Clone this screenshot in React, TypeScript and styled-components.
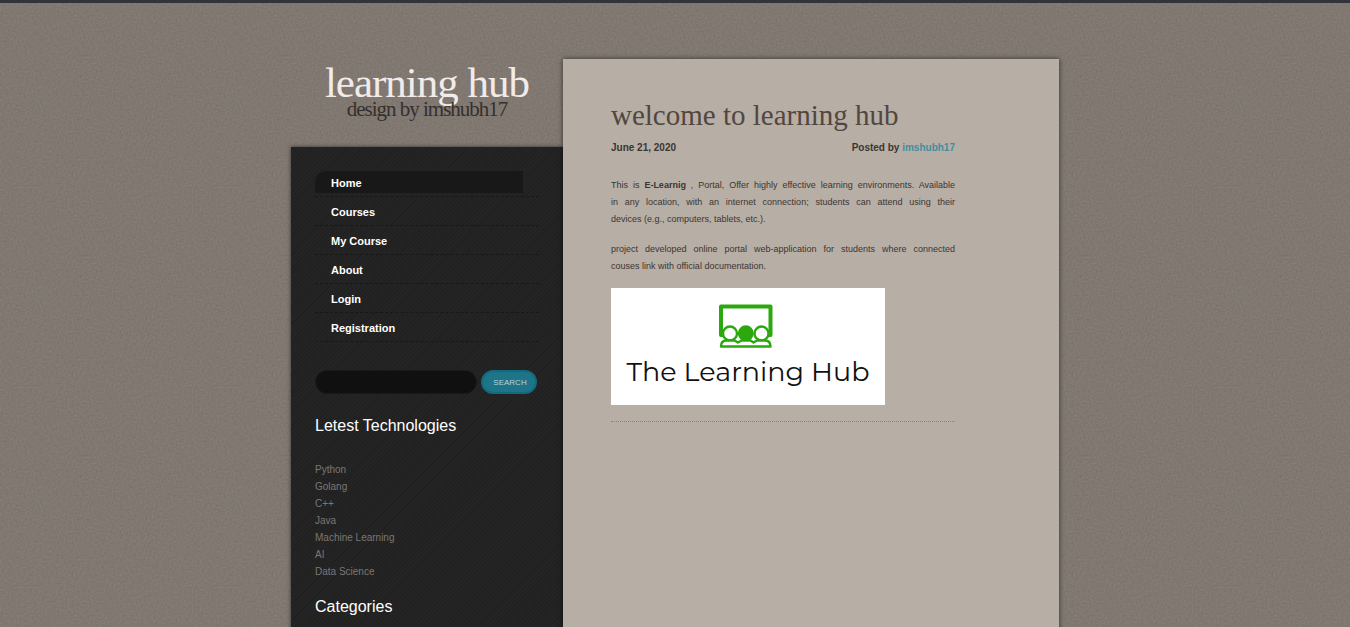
import React from "react";
import styled, { createGlobalStyle } from "styled-components";

const grain = `url("data:image/svg+xml,${encodeURIComponent(
  `<svg xmlns="http://www.w3.org/2000/svg" width="200" height="200"><filter id="n" x="0" y="0" width="100%" height="100%" color-interpolation-filters="sRGB"><feTurbulence type="fractalNoise" baseFrequency="0.5" numOctaves="3" stitchTiles="stitch"/><feColorMatrix values="0.08 0 0 0 0.460  0.08 0 0 0 0.430  0.08 0 0 0 0.402  0 0 0 0 1"/></filter><rect width="200" height="200" filter="url(#n)"/></svg>`
)}")`;

const sans = `"Liberation Sans", Arial, sans-serif`;
const serif = `Georgia, "Liberation Serif", serif`;

const GlobalStyle = createGlobalStyle`
  * { box-sizing: border-box; }
  html { background: #7e776f; }
  body {
    margin: 0;
    min-height: 100vh;
    background: #7e776f ${grain};
    border-top: 3px solid #33343a;
    color: #3c3533;
    font: 10px/17px ${sans};
    overflow: hidden;
  }
  a { text-decoration: none; }
`;

const Page = styled.div`
  display: flex;
  align-items: stretch;
  max-width: 768px;
  min-height: calc(100vh - 3px);
  margin: 0 auto;
  padding-top: 56px;
`;

const Side = styled.div`
  flex: 0 0 272px;
  display: flex;
  flex-direction: column;
`;

const Brand = styled.header`
  height: 88px;
  text-align: center;
  font-family: ${serif};
  letter-spacing: -1px;
`;

const BrandName = styled.h1`
  margin: 0;
  padding-top: 4px;
  font-size: 43px;
  line-height: 40px;
  font-weight: 400;
  a { color: #f1ebea; }
`;

const BrandNote = styled.p`
  margin: 0;
  font-size: 21px;
  line-height: 12px;
  color: #35302d;
`;

const Sidebar = styled.aside`
  flex: 1;
  padding: 24px;
  background: repeating-linear-gradient(135deg, #242424 0 2px, #202020 2px 3px);
  box-shadow: 0 0 4px rgba(0, 0, 0, 0.6);
`;

const Menu = styled.ul`
  list-style: none;
  margin: 0 0 28px;
  padding: 0;
`;

const MenuItem = styled.li`
  height: 29px;
  border-bottom: 1px dashed #181818;
  &:first-child { height: 26px; }
  &:not(:first-child) { padding-top: 3px; }
`;

const MenuLink = styled.a<{ $active?: boolean }>`
  display: block;
  width: 208px;
  height: 22px;
  padding: 1px 0 0 16px;
  border-top-left-radius: 12px;
  background: ${(p) => (p.$active ? "#181818" : "transparent")};
  color: #fff;
  font-size: 11px;
  font-weight: 700;
  line-height: 22px;
`;

const SearchForm = styled.form`
  display: flex;
  align-items: center;
  gap: 4px;
  margin-bottom: 20px;
`;

const SearchInput = styled.input`
  width: 162px;
  height: 24px;
  padding: 0 12px;
  border: 1px solid #1a1a1a;
  border-radius: 12px;
  background: #101010;
  color: #ddd;
  font: 10px ${sans};
`;

const SearchButton = styled.button`
  width: 56px;
  height: 24px;
  padding: 0 0 0 2px;
  border: 2px solid #126b7c;
  border-radius: 12px;
  background: #1e7587;
  color: #b9d3d8;
  font: 8px ${sans};
`;

const SideTitle = styled.h2`
  margin: 0;
  color: #fff;
  font-size: 16px;
  line-height: 24px;
  font-weight: 400;
`;

const TopicList = styled.ul`
  list-style: none;
  margin: 23px 0 15px;
  padding: 0;
  a { color: #7b7775; }
`;

const Content = styled.main`
  flex: 1;
  min-width: 0;
  padding: 40px 104px 40px 48px;
  background: #b7aea5;
  box-shadow: 0 0 5px rgba(0, 0, 0, 0.6);
`;

const Title = styled.h2`
  margin: 0;
  color: #53463f;
  font-family: ${serif};
  font-size: 29px;
  line-height: 32px;
  font-weight: 400;
`;

const Meta = styled.div`
  display: flex;
  justify-content: space-between;
  margin: 8px 0 21px;
  font-weight: 700;
  a { color: #438f9d; }
`;

const Text = styled.p`
  margin: 0 0 13px;
  font-size: 9px;
`;

const Line = styled.span`
  display: block;
  text-align: justify;
  text-align-last: justify;
  &:last-child { text-align-last: left; }
`;

const Banner = styled.figure`
  display: flex;
  flex-direction: column;
  align-items: center;
  width: 274px;
  height: 117px;
  margin: 0;
  padding-top: 16px;
  background: #fff;
`;

const BannerText = styled.figcaption`
  margin-top: 8px;
  color: #111;
  font: 400 27px/32px Montserrat, "Open Sans", sans-serif;
`;

const Rule = styled.hr`
  margin: 16px 0 0;
  border: 0;
  border-top: 1px dotted #8b837b;
`;

const menu = ["Home", "Courses", "My Course", "About", "Login", "Registration"];
const topics = ["Python", "Golang", "C++", "Java", "Machine Learning", "AI", "Data Science"];

function ClassIcon() {
  return (
    <svg width="58" height="44" viewBox="0 0 58 44" fill="none" stroke="#2ca80f" aria-hidden="true">
      <path d="M4.500 31H2V2.500H51.500V31H49" strokeWidth="4" strokeLinejoin="round" />
      <circle cx="26.800" cy="29.300" r="8" fill="#2ca80f" stroke="none" />
      <circle cx="11" cy="29.500" r="7" fill="#fff" strokeWidth="2.400" />
      <circle cx="42.500" cy="29.500" r="7" fill="#fff" strokeWidth="2.400" />
      <path d="M2 42.500C2 38.500 4 36.500 7.500 36.500H15.500L19 38.500L22.500 36.500H31.500L34.500 38.500L38 36.500H46C49.500 36.500 51.500 38.500 51.500 42.500Z" fill="#fff" strokeWidth="2.400" strokeLinejoin="round" />
    </svg>
  );
}

export default function App() {
  return (
    <>
      <GlobalStyle />
      <Page>
        <Side>
          <Brand>
            <BrandName><a href="#home">learning hub</a></BrandName>
            <BrandNote>design by imshubh17</BrandNote>
          </Brand>
          <Sidebar>
            <nav>
              <Menu>
                {menu.map((label, i) => (
                  <MenuItem key={label}>
                    <MenuLink href="#" $active={i === 0}>{label}</MenuLink>
                  </MenuItem>
                ))}
              </Menu>
            </nav>
            <SearchForm role="search">
              <SearchInput type="text" aria-label="Search" />
              <SearchButton type="submit">SEARCH</SearchButton>
            </SearchForm>
            <SideTitle>Letest Technologies</SideTitle>
            <TopicList>
              {topics.map((topic) => (
                <li key={topic}><a href="#">{topic}</a></li>
              ))}
            </TopicList>
            <SideTitle>Categories</SideTitle>
          </Sidebar>
        </Side>
        <Content>
          <Title>welcome to learning hub</Title>
          <Meta>
            <span>June 21, 2020</span>
            <span>Posted by <a href="#">imshubh17</a></span>
          </Meta>
          <Text>
            <Line>
              This is <strong>E-Learnig</strong> , Portal, Offer highly effective learning
              environments. Available
            </Line>
            <Line>in any location, with an internet connection; students can attend using their</Line>
            <Line>devices (e.g., computers, tablets, etc.).</Line>
          </Text>
          <Text>
            <Line>project developed online portal web-application for students where connected</Line>
            <Line>couses link with official documentation.</Line>
          </Text>
          <Banner>
            <ClassIcon />
            <BannerText>The Learning Hub</BannerText>
          </Banner>
          <Rule />
        </Content>
      </Page>
    </>
  );
}
